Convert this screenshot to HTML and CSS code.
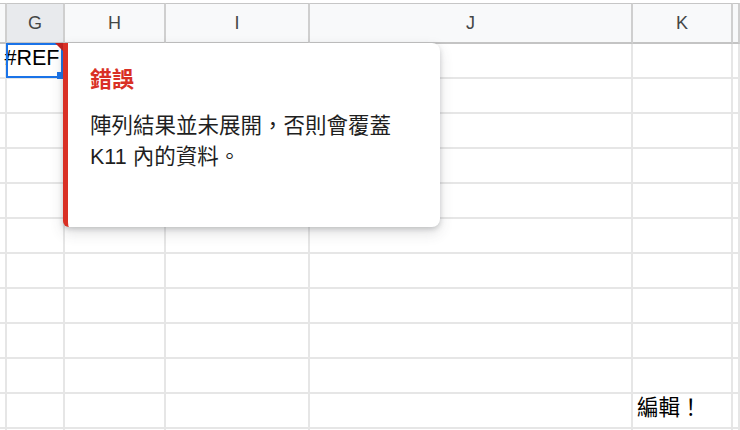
FILE: index.html
```html
<!DOCTYPE html>
<html lang="zh-Hant">
<head>
<meta charset="utf-8">
<title>Sheet</title>
<link rel="stylesheet" href="styles.css">
</head>
<body>
<div class="wrap">
  <div class="sheet">
    <div class="hc"></div><div class="hc sel">G</div><div class="hc">H</div><div class="hc">I</div><div class="hc">J</div><div class="hc">K</div><div class="hc"></div>

    <div class="c"></div><div class="c err"><span>#REF!</span></div><div class="c"></div><div class="c"></div><div class="c"></div><div class="c"></div><div class="c"></div>
    <div class="c"></div><div class="c"></div><div class="c"></div><div class="c"></div><div class="c"></div><div class="c"></div><div class="c"></div>
    <div class="c"></div><div class="c"></div><div class="c"></div><div class="c"></div><div class="c"></div><div class="c"></div><div class="c"></div>
    <div class="c"></div><div class="c"></div><div class="c"></div><div class="c"></div><div class="c"></div><div class="c"></div><div class="c"></div>
    <div class="c"></div><div class="c"></div><div class="c"></div><div class="c"></div><div class="c"></div><div class="c"></div><div class="c"></div>
    <div class="c"></div><div class="c"></div><div class="c"></div><div class="c"></div><div class="c"></div><div class="c"></div><div class="c"></div>
    <div class="c"></div><div class="c"></div><div class="c"></div><div class="c"></div><div class="c"></div><div class="c"></div><div class="c"></div>
    <div class="c"></div><div class="c"></div><div class="c"></div><div class="c"></div><div class="c"></div><div class="c"></div><div class="c"></div>
    <div class="c"></div><div class="c"></div><div class="c"></div><div class="c"></div><div class="c"></div><div class="c"></div><div class="c"></div>
    <div class="c"></div><div class="c"></div><div class="c"></div><div class="c"></div><div class="c"></div><div class="c"></div><div class="c"></div>
    <div class="c"></div><div class="c"></div><div class="c"></div><div class="c"></div><div class="c"></div><div class="c txt">編輯！</div><div class="c"></div>
    <div class="c"></div><div class="c"></div><div class="c"></div><div class="c"></div><div class="c"></div><div class="c"></div><div class="c"></div>
  </div>

  <div class="selection"></div>
  <div class="err-flag"></div>
  <div class="handle"></div>

  <div class="tooltip">
    <div class="tt-title">錯誤</div>
    <div class="tt-body">陣列結果並未展開，否則會覆蓋 K11 內的資料。</div>
  </div>
</div>
</body>
</html>
```

FILE: styles.css
```css
html, body {
  margin: 0;
  padding: 0;
  background: #ffffff;
  overflow: hidden;
}

.wrap {
  position: relative;
  width: 740px;
  height: 430px;
  overflow: hidden;
  font-family: "Liberation Sans", "Noto Sans CJK TC", sans-serif;
}

.sheet {
  display: grid;
  grid-template-columns: 7px 58px 101px 144px 323px 100px 1fr;
  grid-template-rows: 41px repeat(12, 35px);
  padding-top: 3px;
}

.hc {
  box-sizing: border-box;
  background: #f8f9fa;
  border-top: 1px solid #c6c6c6;
  border-right: 2px solid #cfcfcf;
  border-bottom: 2px solid #c4c4c4;
  color: #444746;
  font-size: 18px;
  line-height: 38px;
  text-align: center;
}

.hc.sel {
  background: #e8eaed;
}

.c {
  box-sizing: border-box;
  border-right: 2px solid #e6e6e6;
  border-bottom: 2px solid #e6e6e6;
  font-size: 21.5px;
  line-height: 29px;
  color: #000000;
  white-space: nowrap;
}

.c.txt {
  padding-left: 4px;
}

.c.err {
  display: flex;
  justify-content: center;
  line-height: 29px;
}

.selection {
  position: absolute;
  left: 6px;
  top: 43px;
  width: 57px;
  height: 35px;
  box-sizing: border-box;
  border: 2px solid #1a73e8;
}

.handle {
  position: absolute;
  left: 57px;
  top: 72px;
  width: 7px;
  height: 7px;
  background: #1a73e8;
}

.err-flag {
  position: absolute;
  left: 55px;
  top: 43px;
  width: 0;
  height: 0;
  border-top: 8px solid #c5221f;
  border-left: 8px solid transparent;
}

.tooltip {
  position: absolute;
  left: 63px;
  top: 43px;
  width: 377px;
  height: 184px;
  box-sizing: border-box;
  background: #ffffff;
  border-left: 5px solid #d93025;
  border-radius: 0 8px 8px 6px;
  box-shadow: 0 2px 5px rgba(60, 64, 67, 0.22), 0 6px 14px rgba(60, 64, 67, 0.16);
  padding: 21px 22px 0 22px;
  z-index: 5;
}

.tt-title {
  color: #d93025;
  font-weight: bold;
  font-size: 22px;
  line-height: 31px;
}

.tt-body {
  margin-top: 16px;
  color: #1f1f1f;
  font-size: 21.5px;
  line-height: 31px;
}
```
